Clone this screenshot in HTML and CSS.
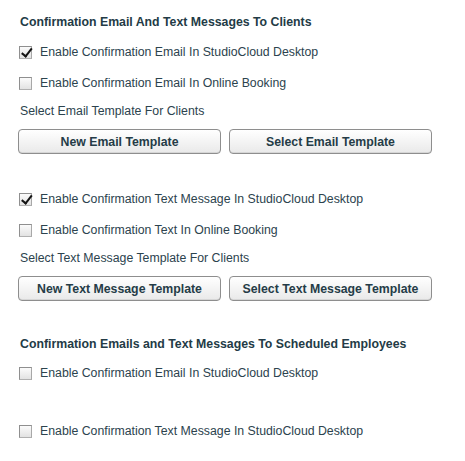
FILE: index.html
```html
<!DOCTYPE html>
<html lang="en">
<head>
<meta charset="utf-8">
<title>Confirmation Settings</title>
<link rel="stylesheet" href="styles.css">
</head>
<body>
<div class="settings">
  <section class="group">
    <h2 class="group-title">Confirmation Email And Text Messages To Clients</h2>
    <label class="check-row"><span class="box is-checked"></span><span>Enable Confirmation Email In StudioCloud Desktop</span></label>
    <label class="check-row"><span class="box"></span><span>Enable Confirmation Email In Online Booking</span></label>
    <p class="hint">Select Email Template For Clients</p>
    <div class="btn-row">
      <button class="btn" type="button">New Email Template</button>
      <button class="btn" type="button">Select Email Template</button>
    </div>
  </section>

  <section class="group group-plain">
    <label class="check-row"><span class="box is-checked"></span><span>Enable Confirmation Text Message In StudioCloud Desktop</span></label>
    <label class="check-row"><span class="box"></span><span>Enable Confirmation Text In Online Booking</span></label>
    <p class="hint">Select Text Message Template For Clients</p>
    <div class="btn-row">
      <button class="btn" type="button">New Text Message Template</button>
      <button class="btn" type="button">Select Text Message Template</button>
    </div>
  </section>

  <section class="group group-employees">
    <h2 class="group-title">Confirmation Emails and Text Messages To Scheduled Employees</h2>
    <label class="check-row"><span class="box"></span><span>Enable Confirmation Email In StudioCloud Desktop</span></label>
    <label class="check-row row-spaced"><span class="box"></span><span>Enable Confirmation Text Message In StudioCloud Desktop</span></label>
  </section>
</div>
</body>
</html>
```

FILE: styles.css
```css
html, body {
  margin: 0;
  padding: 0;
  background: #ffffff;
}

body {
  font-family: "Liberation Sans", Arial, Helvetica, sans-serif;
  font-size: 12.3px;
  color: #2c434e;
}

.settings {
  width: 414px;
  padding: 14px 0 0 18px;
}

.group-title {
  margin: 0 0 6px 2px;
  font-size: 12.3px;
  font-weight: bold;
  line-height: 16px;
  color: #233b46;
}

.check-row {
  display: flex;
  align-items: center;
  height: 31px;
  line-height: 16px;
  cursor: default;
}

.box {
  position: relative;
  box-sizing: border-box;
  width: 13px;
  height: 13px;
  margin: 2px 8px 0 1px;
  border: 1px solid #8f8f8f;
  border-bottom-color: #b0b0b0;
  border-right-color: #a8a8a8;
  background: linear-gradient(#fbfbfb, #e2e2e2);
  flex: none;
}

.box.is-checked::after {
  content: "";
  position: absolute;
  left: 3.5px;
  top: -1px;
  width: 4px;
  height: 8.5px;
  border: solid #141414;
  border-width: 0 2.2px 2.2px 0;
  transform: rotate(38deg);
}

.hint {
  margin: 5px 0 0 2px;
  line-height: 16px;
}

.btn-row {
  display: grid;
  grid-template-columns: 1fr 1fr;
  column-gap: 8px;
  margin-top: 10px;
}

.btn {
  height: 25px;
  padding: 0;
  border: 1px solid #8e8e8e;
  border-radius: 4px;
  background: linear-gradient(#ffffff, #e9e9e9);
  box-shadow: inset 0 -1px 0 #d6d6d6;
  font-family: inherit;
  font-size: 12.3px;
  font-weight: bold;
  color: #253c47;
}

.group-plain {
  margin-top: 29px;
}

.group-employees {
  margin-top: 35px;
}

.group-employees .group-title {
  margin-bottom: 5px;
}

.row-spaced {
  margin-top: 27px;
}
```
